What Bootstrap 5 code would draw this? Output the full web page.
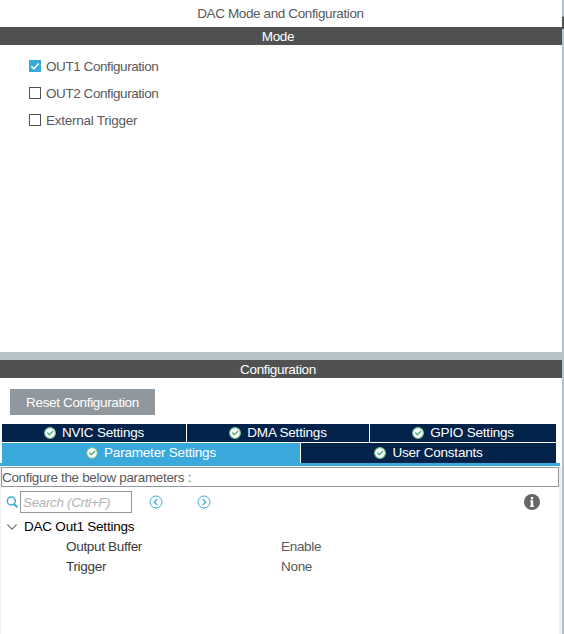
<!DOCTYPE html>
<html lang="en">
<head>
<meta charset="utf-8">
<meta name="viewport" content="width=device-width, initial-scale=1">
<title>DAC Mode and Configuration</title>
<link href="https://cdn.jsdelivr.net/npm/bootstrap@5.3.0/dist/css/bootstrap.min.css" rel="stylesheet">
<style>
body{font:13.5px/18px "Liberation Sans",Arial,sans-serif;color:#58595b;background:#fff;width:564px;height:634px;overflow:hidden}
svg{display:block;flex:none}
.pane{width:562px}
.edge{width:2px;background:#b7c3c8}
.edge-thumb{height:13px;margin-top:16px;background:#505251;border-top:1px solid #8b9598}
.title{height:27px;line-height:27px;letter-spacing:-.38px;padding-right:1px}
.bar{height:18px;line-height:19px;background:#505251;color:#fff;padding-right:6px;letter-spacing:-.35px}
.mode-body{height:307px;padding:13px 0 0 29px}
.opt{height:18px;margin-bottom:9px;letter-spacing:-.43px}
.opt.wide{letter-spacing:-.26px}
.opt .form-check-input{width:12px;height:12px;margin:0 5px 2px 0;border:1px solid #505251;border-radius:0;background-color:#fff;flex:none}
.opt .tick{margin:0 5px 2px 0}
.splitter{height:8px;background:#b7c3c8}
.conf{height:256px}
.reset{width:145px;height:26px;margin:11px 0 9px 10px;background:#90979d;color:#fff;border:0;border-radius:0;padding:0;font-size:13.5px;line-height:27px;letter-spacing:-.34px}
.reset:hover{background:#90979d;color:#fff}
.tabs{width:554px;margin-left:2px;column-gap:1px}
.row-a{grid-template-columns:184px 182px 186px}
.row-b{grid-template-columns:298px 255px;margin-top:1px}
.tab{background:#03234b;color:#fff;height:18px;line-height:18px;letter-spacing:-.2px}
.tab svg{margin-right:6px}
.row-b .tab{height:20px;padding-bottom:1px}
.row-b .tab.on{background:#39a9dc}
.rule{height:3px;width:560px;background:#39a9dc}
.inner{border-left:1px solid #f0f0f0;border-right:3px solid #f0f0f0;padding-top:1px}
.hint{height:20px;border:1px solid #90979d;line-height:19px;letter-spacing:-.33px}
.tools{height:22px;margin-top:4px;padding-left:5px}
.find{width:112px;height:22px;border:1px solid #90979d;border-radius:0;padding:0 2px;font:italic 13.5px/20px "Liberation Sans",Arial,sans-serif;letter-spacing:-.36px}
.find::placeholder{color:#b4b4b4;opacity:1}
.prev{margin-left:17px}
.next{margin-left:34px}
.info{margin-right:19px}
.props{padding-top:4px;line-height:20px;color:#3b3b3b}
.group{color:#000;letter-spacing:-.22px;padding-left:6px}
.group svg{margin-right:7px}
.prop{padding-left:65px;letter-spacing:-.31px}
.prop span:first-child{width:215px}
.val{color:#58595b}
</style>
<script src="https://cdn.jsdelivr.net/npm/bootstrap@5.3.0/dist/js/bootstrap.bundle.min.js"></script>
</head>
<body class="d-flex">
<svg width="0" height="0" class="position-absolute"><defs>
<symbol id="ok" viewBox="0 0 12 12"><circle cx="6" cy="6" r="5.4" fill="#fff" stroke="#6fc08f" stroke-width="1.2"/><path d="M3.2 5.6 5.4 7.8 9 4.1" fill="none" stroke="#4fb077" stroke-width="1.4"/></symbol>
</defs></svg>
<div class="pane d-flex flex-column">
  <div class="title text-center">DAC Mode and Configuration</div>
  <div class="bar text-center">Mode</div>
  <div class="mode-body">
    <div class="opt d-flex align-items-center"><svg class="tick" width="12" height="12"><path fill="#39a9dc" d="M0 0h12v12H0z"/><path d="M2.3 6.2 4.9 8.8 9.7 3.6" fill="none" stroke="#fff" stroke-width="1.5"/></svg>OUT1 Configuration</div>
    <label class="opt d-flex align-items-center"><input class="form-check-input" type="checkbox">OUT2 Configuration</label>
    <label class="opt wide d-flex align-items-center"><input class="form-check-input" type="checkbox">External Trigger</label>
  </div>
  <div class="splitter"></div>
  <div class="bar text-center">Configuration</div>
  <div class="conf d-flex flex-column">
    <button class="btn reset">Reset Configuration</button>
    <div class="tabs row-a d-grid">
      <div class="tab d-flex align-items-center justify-content-center"><svg width="12" height="12"><use href="#ok"/></svg>NVIC Settings</div>
      <div class="tab d-flex align-items-center justify-content-center"><svg width="12" height="12"><use href="#ok"/></svg>DMA Settings</div>
      <div class="tab d-flex align-items-center justify-content-center"><svg width="12" height="12"><use href="#ok"/></svg>GPIO Settings</div>
    </div>
    <div class="tabs row-b d-grid">
      <div class="tab on d-flex align-items-center justify-content-center"><svg width="12" height="12"><use href="#ok"/></svg>Parameter Settings</div>
      <div class="tab d-flex align-items-center justify-content-center"><svg width="12" height="12"><use href="#ok"/></svg>User Constants</div>
    </div>
    <div class="rule"></div>
    <div class="inner flex-grow-1">
      <div class="hint">Configure the below parameters :</div>
      <div class="tools d-flex align-items-center">
        <svg width="14" height="14" fill="none" stroke="#39a9dc" stroke-width="1.5"><circle cx="5.3" cy="6" r="4"/><path d="m8 9 3.4 3.4" stroke-width="2"/></svg>
        <input class="form-control find" placeholder="Search (Crtl+F)">
        <svg class="prev" width="14" height="14" viewBox="0 0 14 14" fill="none" stroke="#39a9dc"><circle cx="7" cy="7" r="6"/><path d="M8.3 4 5.3 7l3 3" stroke-width="1.2"/></svg>
        <svg class="next" width="14" height="14" viewBox="0 0 14 14" fill="none" stroke="#39a9dc"><circle cx="7" cy="7" r="6"/><path d="m5.7 4 3 3-3 3" stroke-width="1.2"/></svg>
        <svg class="info ms-auto" width="16" height="16"><circle cx="8" cy="8" r="8" fill="#666"/><path d="M6.8 3h2.4v2.2H6.8zM6 6.3h3.2v5.4h.9V13H5.9v-1.3h.9V7.6H6z" fill="#fff"/></svg>
      </div>
      <div class="props">
        <div class="group d-flex align-items-center"><svg width="10" height="8" fill="none" stroke="#777" stroke-width="1.2"><path d="m.4 1.5 4.6 4.6 4.6-4.6"/></svg>DAC Out1 Settings</div>
        <div class="prop d-flex"><span>Output Buffer</span><span class="val">Enable</span></div>
        <div class="prop d-flex"><span>Trigger</span><span class="val">None</span></div>
      </div>
    </div>
  </div>
</div>
<div class="edge"><div class="edge-thumb"></div></div>
</body>
</html>
